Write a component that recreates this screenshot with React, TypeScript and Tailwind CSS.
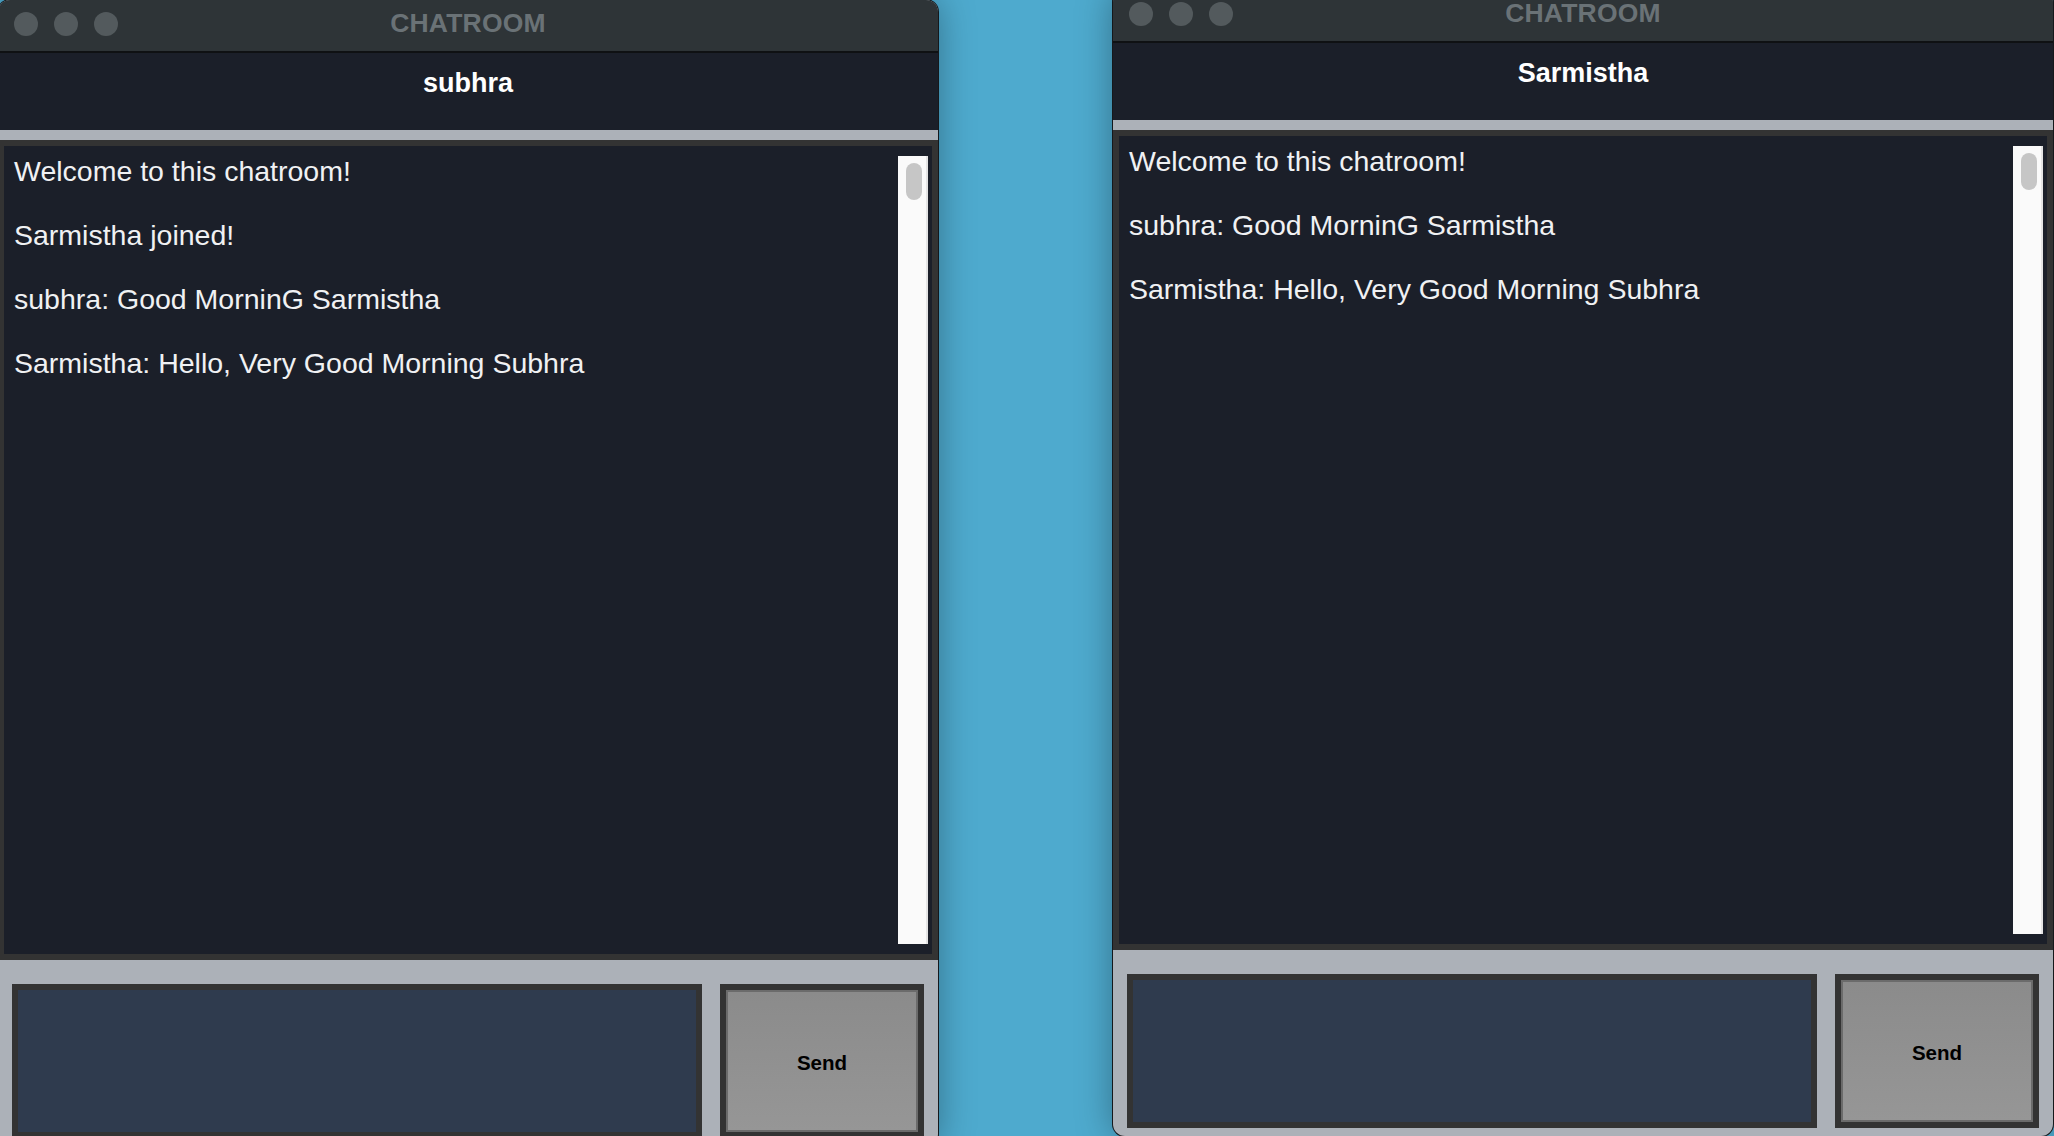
import React from "react";

type WinProps = { name: string; messages: string[]; className?: string };

function ChatWindow({ name, messages, className }: WinProps) {
  return (
    <div
      className={
        "relative w-[940px] h-[1146px] shrink-0 flex flex-col rounded-[12px] overflow-hidden bg-[#acb1b8] shadow-[0_0_36px_rgba(0,0,0,0.35)] ring-1 ring-[#15181b] " +
        (className ?? "")
      }
    >
      {/* title bar */}
      <div className="relative h-[53px] shrink-0 bg-[#2e3437] border-b-2 border-[#0f1113] flex items-center justify-center pb-[6px]">
        <div className="absolute left-[16px] top-[12px] flex gap-[16px]">
          <div className="w-[24px] h-[24px] rounded-full bg-[#535a5d]" />
          <div className="w-[24px] h-[24px] rounded-full bg-[#535a5d]" />
          <div className="w-[24px] h-[24px] rounded-full bg-[#535a5d]" />
        </div>
        <span className="text-[26.5px] leading-[30px] font-bold text-[#6a7276] tracking-[0.2px]">
          CHATROOM
        </span>
      </div>

      {/* header */}
      <div className="h-[77px] shrink-0 bg-[#1b1f29] pt-[15px] text-center text-[27px] leading-[30px] font-bold text-white">
        {name}
      </div>

      {/* body */}
      <div className="flex flex-col pt-[10px]">
        <div className="h-[820px] border-[6px] border-[#333333] bg-[#1b1f29] flex">
          <div className="flex-1 flex flex-col gap-[32px] pl-[10px] pt-[9px] text-[28.5px] leading-[32px] text-[#f0f1f3]">
            {messages.map((m, i) => (
              <div key={i}>{m}</div>
            ))}
          </div>
          <div className="py-[10px] pr-[4px]">
            <div className="w-[30px] h-full bg-[#fafafa] border-r-2 border-[#e4e4e4] pt-[7px] pl-[8px]">
              <div className="w-[16px] h-[37px] rounded-full bg-[#c6c6c6]" />
            </div>
          </div>
        </div>

        <div className="flex gap-[18px] pt-[24px] px-[14px]">
          <div className="w-[690px] h-[154px] border-[6px] border-[#333333] bg-[#2f3b4e]" />
          <div className="w-[204px] h-[154px] border-[6px] border-[#333333]">
            <div className="w-full h-full border-2 border-[#6b6b6b] bg-gradient-to-b from-[#8b8b8b] to-[#969696] flex items-center justify-center pt-[4px]">
              <span className="text-[20.5px] font-bold text-black">Send</span>
            </div>
          </div>
        </div>
      </div>
    </div>
  );
}

export default function App() {
  return (
    <div className="w-[2054px] h-[1136px] overflow-hidden bg-[#4eaace] flex items-start gap-[175px] font-['Liberation_Sans',Arial,sans-serif]">
      <ChatWindow
        name="subhra"
        className="ml-[-2px]"
        messages={[
          "Welcome to this chatroom!",
          "Sarmistha joined!",
          "subhra: Good MorninG Sarmistha",
          "Sarmistha: Hello, Very Good Morning Subhra",
        ]}
      />
      <ChatWindow
        name="Sarmistha"
        className="mt-[-10px]"
        messages={[
          "Welcome to this chatroom!",
          "subhra: Good MorninG Sarmistha",
          "Sarmistha: Hello, Very Good Morning Subhra",
        ]}
      />
    </div>
  );
}
